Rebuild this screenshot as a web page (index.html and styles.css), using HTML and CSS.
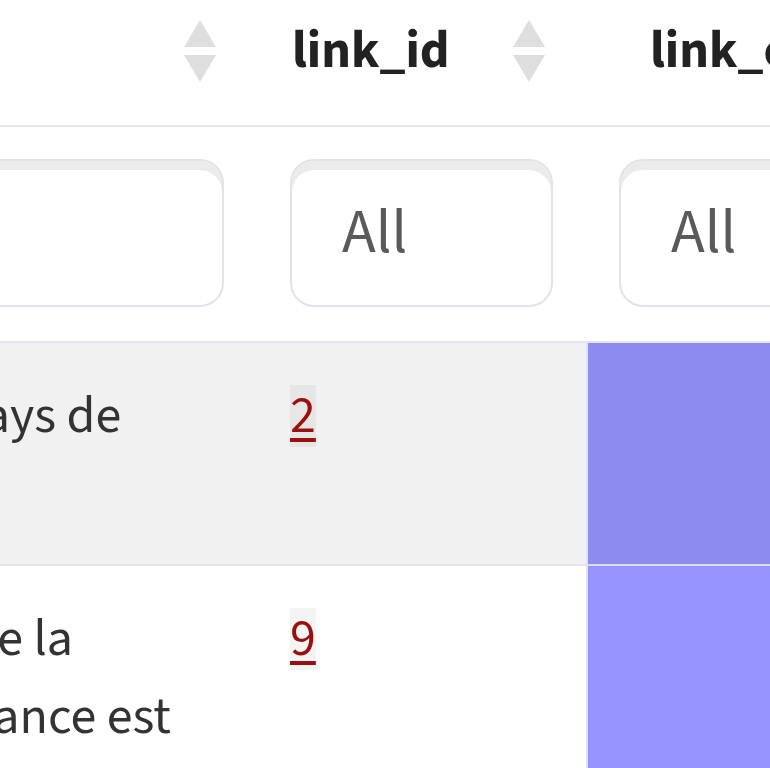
FILE: index.html
```html
<!DOCTYPE html>
<html lang="fr">
<head>
<meta charset="utf-8">
<title>links</title>
<link rel="stylesheet" href="styles.css">
</head>
<body>
<div class="scroller">
<table class="grid">
  <colgroup>
    <col class="col-a">
    <col class="col-b">
    <col class="col-c">
  </colgroup>
  <thead>
    <tr class="head-row">
      <th>
        <div class="th-inner">
          <span class="th-label">label</span>
          <svg class="sort" viewBox="0 0 32 62" width="32" height="62" aria-hidden="true">
            <polygon points="16,0 32,27 0,27"/>
            <polygon points="0,35 32,35 16,62"/>
          </svg>
        </div>
      </th>
      <th>
        <div class="th-inner">
          <span class="th-label">link_id</span>
          <svg class="sort" viewBox="0 0 32 62" width="32" height="62" aria-hidden="true">
            <polygon points="16,0 32,27 0,27"/>
            <polygon points="0,35 32,35 16,62"/>
          </svg>
        </div>
      </th>
      <th class="th-wide">
        <div class="th-inner">
          <span class="th-label">link_count</span>
        </div>
      </th>
    </tr>
    <tr class="filter-row">
      <td><input class="filter" type="text" placeholder="All"></td>
      <td><input class="filter" type="text" placeholder="All"></td>
      <td><input class="filter" type="text" placeholder="All"></td>
    </tr>
  </thead>
  <tbody>
    <tr class="row-odd">
      <td class="txt">Liste des pays de
l'UE</td>
      <td class="num"><a href="#">2</a></td>
      <td class="swatch swatch-1"></td>
    </tr>
    <tr class="row-even">
      <td class="txt">Capitales de la
son importance est
grande</td>
      <td class="num"><a href="#">9</a></td>
      <td class="swatch swatch-2"></td>
    </tr>
  </tbody>
</table>
</div>
</body>
</html>
```

FILE: styles.css
```css
html, body {
  margin: 0;
  padding: 0;
  background: #ffffff;
  overflow: hidden;
}

body {
  font-family: "Source Sans Pro", "Source Sans 3", Lato, "Noto Sans", sans-serif;
  color: #333333;
}

.scroller {
  margin-left: -276px;
  width: 1320px;
}

.grid {
  border-collapse: separate;
  border-spacing: 0;
  table-layout: fixed;
  width: 1283px;
}

.col-a { width: 533px; }
.col-b { width: 329px; }
.col-c { width: 421px; }

/* header */
.head-row th {
  padding: 20px 41px 43px 35px;
  border-bottom: 2px solid #e4e6eb;
  text-align: left;
  vertical-align: top;
}

.th-inner {
  display: flex;
  align-items: center;
  justify-content: space-between;
  height: 62px;
}

.th-label {
  font-size: 52px;
  font-weight: 700;
  line-height: 62px;
  color: #222222;
  white-space: nowrap;
}

.sort {
  display: block;
  flex: none;
  fill: #dedede;
}

.head-row .th-wide {
  padding-left: 64px;
}

/* filter row */
.filter-row td {
  padding: 32px 33px 34px 33px;
  border-bottom: 2px solid #e4e6eb;
  vertical-align: top;
}

.filter {
  display: block;
  box-sizing: border-box;
  width: 100%;
  height: 148px;
  margin: 0;
  padding: 0 20px 0 50px;
  border: 2px solid #e1e3e8;
  border-radius: 24px;
  box-shadow: inset 0 9px 0 #ebebec;
  background: #ffffff;
  font-family: inherit;
  font-size: 62px;
  color: #555555;
  outline: none;
}

.filter::placeholder {
  color: #5a5a5a;
  opacity: 1;
}

/* body rows */
tbody td {
  padding: 34px 33px 31px 33px;
  border-bottom: 2px solid #e4e6eb;
  vertical-align: top;
  font-size: 52px;
  line-height: 78px;
}

.txt {
  white-space: pre-line;
}

.row-odd td { background: #f1f1f1; }
.row-even td { background: #ffffff; }

.num a {
  display: inline-block;
  line-height: 62px;
  color: #9b0f0f;
  text-decoration: underline;
  text-decoration-thickness: 4px;
  text-underline-offset: 6px;
  background: rgba(0, 0, 0, 0.045);
}

.row-odd .swatch,
.row-even .swatch {
  border-left: 2px solid #e2e2ee;
  border-bottom-color: #dcdce6;
}

.row-odd .swatch-1 { background: #8b8bf0; }
.row-even .swatch-2 { background: #9595fd; }
```
